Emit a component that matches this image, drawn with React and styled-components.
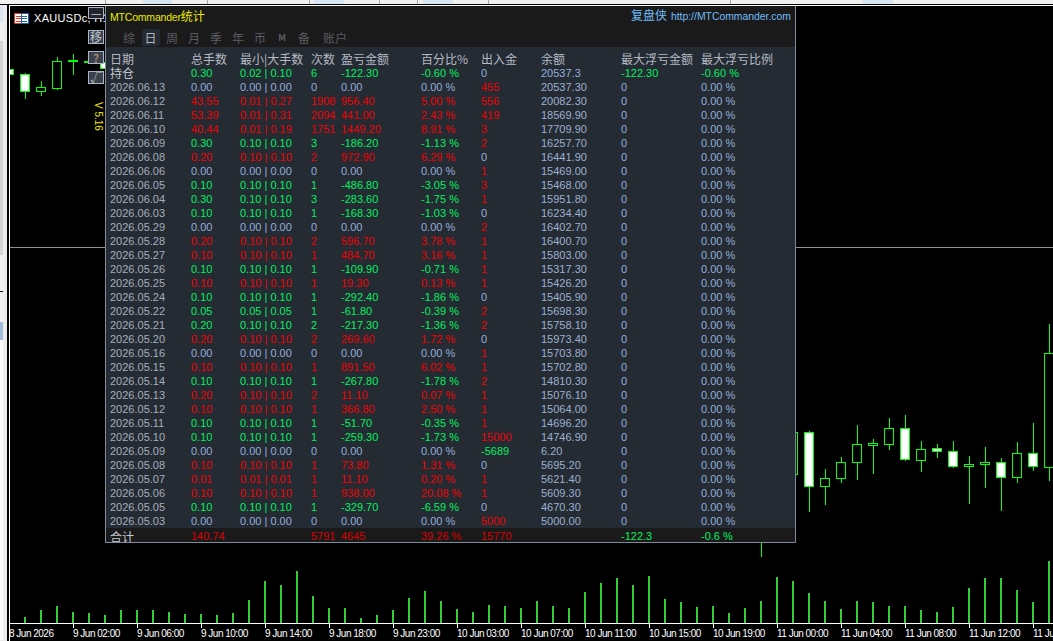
import React from "react";
import styled, { createGlobalStyle } from "styled-components";

const GlobalStyle = createGlobalStyle`
  html, body { margin: 0; padding: 0; background: #000; overflow: hidden; }
  #root { width: 1053px; height: 641px; }
`;

const LATIN = `"Liberation Sans", Arial, "Noto Sans CJK SC", sans-serif`;
const TONES = { flat: "#93aedb", up: "#f00000", down: "#00f060" };

const Page = styled.div`
  width: 1053px;
  height: 641px;
  display: flex;
  flex-direction: column;
  font-family: ${LATIN};
  overflow: hidden;
`;
const TopStrip = styled.div`
  height: 4px;
  flex: none;
  display: flex;
  background: #f0f0f0;
  border-bottom: 1px solid #000;
`;
const StripSlot = styled.div`
  width: ${(p) => p.$w}px;
  flex: none;
  box-sizing: border-box;
  border-right: 1px solid ${(p) => (p.$mark ? "#a8a8a8" : "transparent")};
  background: ${(p) => (p.$on ? "#d8e6f4" : "transparent")};
`;
const Desk = styled.div`
  flex: 1;
  display: flex;
  min-height: 0;
`;
const Gutter = styled.div`
  width: 7px;
  flex: none;
  display: flex;
  flex-direction: column;
  background: #ececec;
  border-right: 2px solid #000;
`;
const GutterPiece = styled.div`
  width: 3px;
  height: ${(p) => p.$h}px;
  flex: none;
  background: ${(p) => p.$c};
`;
const Chart = styled.div`
  position: relative;
  flex: 1;
  display: flex;
  flex-direction: column;
  background: #000;
  border-left: 1px solid #fff;
  border-top: 1px solid #fff;
`;
const Plot = styled.svg`
  position: absolute;
  left: 0;
  top: 0;
  width: 1043px;
  height: 635px;
`;
const AxisRow = styled.div`
  margin-top: auto;
  margin-left: -1px;
  height: 14px;
  display: flex;
  position: relative;
  overflow: hidden;
`;
const AxisLabel = styled.span`
  width: 64px;
  flex: none;
  color: #fff;
  font: 10px/13px ${LATIN};
  letter-spacing: -0.5px;
  white-space: nowrap;
`;
const Symbol = styled.div`
  position: absolute;
  left: 4px;
  top: 5px;
  display: flex;
  align-items: center;
  gap: 5px;
  height: 14px;
  color: #fff;
  font: 11px/14px ${LATIN};
  letter-spacing: 0.3px;
  white-space: nowrap;
`;
const SideButtons = styled.div`
  position: absolute;
  left: 78px;
  top: 1px;
  width: 16px;
  display: flex;
  flex-direction: column;
  align-items: stretch;
  gap: 7px;
`;
const SideButton = styled.div`
  height: ${(p) => p.$h}px;
  margin-bottom: ${(p) => p.$after || 0}px;
  box-sizing: border-box;
  display: flex;
  align-items: center;
  justify-content: center;
  border: 1px solid #aab4c4;
  background: ${(p) => p.$bg || "#3c424c"};
  color: ${(p) => p.$fg || "#c2c8d2"};
  font: 12px/12px "Noto Sans CJK SC", ${LATIN};
`;
const Version = styled.div`
  position: absolute;
  left: 83px;
  top: 96px;
  writing-mode: vertical-rl;
  color: #e8e800;
  font: 10px/10px ${LATIN};
`;
const Panel = styled.div`
  position: absolute;
  left: 95px;
  top: 0;
  width: 691px;
  height: 537px;
  box-sizing: border-box;
  display: flex;
  flex-direction: column;
  background: #252b33;
  border-left: 1px solid #7d8ba0;
  border-right: 1px solid #7d8ba0;
  border-bottom: 1px solid #7d8ba0;
`;
const TitleBar = styled.div`
  height: 41px;
  flex: none;
  box-sizing: border-box;
  background: #1a1a1a;
  padding: 2px 4px 1px;
  display: flex;
  flex-direction: column;
  justify-content: space-between;
`;
const TitleLine = styled.div`
  display: flex;
  justify-content: space-between;
  align-items: center;
  height: 16px;
`;
const AppName = styled.span`
  color: #e8e800;
  font: 10.5px/16px ${LATIN};
  letter-spacing: -0.2px;
  & > b { font: 400 12px/16px "Noto Sans CJK SC", sans-serif; letter-spacing: 0; }
`;
const Brand = styled.span`
  color: #70bcf8;
  font: 10.4px/16px ${LATIN};
  & > b { font: 400 12px/16px "Noto Sans CJK SC", sans-serif; margin-right: 4px; }
`;
const Tabs = styled.div`
  display: flex;
  align-items: center;
  margin-left: -4px;
  padding-left: 12px;
  height: 17px;
`;
const Tab = styled.span`
  width: ${(p) => p.$w || 22}px;
  flex: none;
  height: 17px;
  display: flex;
  align-items: center;
  justify-content: center;
  color: ${(p) => (p.$active ? "#b4b8c0" : "#5a5d62")};
  font: ${(p) => (p.$bold ? "700 9px" : "12px")}/16px "Noto Sans CJK SC", ${LATIN};
  background: ${(p) => (p.$active ? "#252b33" : "transparent")};
  border-radius: 2px;
  margin: 0 ${(p) => p.$gap || 0}px;
`;
const Table = styled.div`
  display: flex;
  flex-direction: column;
  padding-top: 5px;
  flex: 1;
`;
const COLS = "81px 49px 71px 30px 80px 60px 60px 80px 80px 1fr";
const Row = styled.div`
  display: grid;
  grid-template-columns: ${COLS};
  height: 14px;
  padding-left: 4px;
  font: 11px/14px ${LATIN};
  white-space: nowrap;
`;
const HeadRow = styled(Row)`
  font: 12px/14px "Noto Sans CJK SC", ${LATIN};
  color: #b4bac4;
`;
const TotalRow = styled(Row)`
  margin-top: auto;
  height: 14px;
  line-height: 16px;
  overflow: hidden;
  background: #1a1a1a;
`;
const Cell = styled.span`
  color: ${(p) => p.$c || TONES[p.$tone || "flat"]};
`;
const CjkCell = styled.span`
  color: #c4c8d0;
  font: 12px/${(p) => p.$lh || 14}px "Noto Sans CJK SC", sans-serif;
`;

const DATA = `06.13 0.00 0.00 0.00 0 0.00 0.00 455 20537.30
06.12 43.55 0.01 0.27 1908 956.40 5.00 556 20082.30
06.11 53.39 0.01 0.31 2094 441.00 2.43 419 18569.90
06.10 40.44 0.01 0.19 1751 1449.20 8.91 3 17709.90
06.09 0.30 0.10 0.10 3 -186.20 -1.13 2 16257.70
06.08 0.20 0.10 0.10 2 972.90 6.29 0 16441.90
06.06 0.00 0.00 0.00 0 0.00 0.00 1 15469.00
06.05 0.10 0.10 0.10 1 -486.80 -3.05 3 15468.00
06.04 0.30 0.10 0.10 3 -283.60 -1.75 1 15951.80
06.03 0.10 0.10 0.10 1 -168.30 -1.03 0 16234.40
05.29 0.00 0.00 0.00 0 0.00 0.00 2 16402.70
05.28 0.20 0.10 0.10 2 596.70 3.78 1 16400.70
05.27 0.10 0.10 0.10 1 484.70 3.16 1 15803.00
05.26 0.10 0.10 0.10 1 -109.90 -0.71 1 15317.30
05.25 0.10 0.10 0.10 1 19.30 0.13 1 15426.20
05.24 0.10 0.10 0.10 1 -292.40 -1.86 0 15405.90
05.22 0.05 0.05 0.05 1 -61.80 -0.39 2 15698.30
05.21 0.20 0.10 0.10 2 -217.30 -1.36 2 15758.10
05.20 0.20 0.10 0.10 2 269.60 1.72 0 15973.40
05.16 0.00 0.00 0.00 0 0.00 0.00 1 15703.80
05.15 0.10 0.10 0.10 1 891.50 6.02 1 15702.80
05.14 0.10 0.10 0.10 1 -267.80 -1.78 2 14810.30
05.13 0.20 0.10 0.10 2 11.10 0.07 1 15076.10
05.12 0.10 0.10 0.10 1 366.80 2.50 1 15064.00
05.11 0.10 0.10 0.10 1 -51.70 -0.35 1 14696.20
05.10 0.10 0.10 0.10 1 -259.30 -1.73 15000 14746.90
05.09 0.00 0.00 0.00 0 0.00 0.00 -5689 6.20
05.08 0.10 0.10 0.10 1 73.80 1.31 0 5695.20
05.07 0.01 0.01 0.01 1 11.10 0.20 1 5621.40
05.06 0.10 0.10 0.10 1 938.00 20.08 1 5609.30
05.05 0.10 0.10 0.10 1 -329.70 -6.59 0 4670.30
05.03 0.00 0.00 0.00 0 0.00 0.00 5000 5000.00`
  .split("\n")
  .map((l) => l.split(" "));

const toneOf = (v) => {
  const n = parseFloat(v);
  return n > 0 ? "up" : n < 0 ? "down" : "flat";
};

const VOLUMES = [
  6, 13, 17, 11, 10, 8, 13, 13, 13, 11, 9, 9, 8, 10, 23, 42, 38, 52, 27, 15, 15, 5, 8, 13,
  25, 32, 22, 14, 11, 18, 17, 15, 22, 17, 15, 31, 40, 45, 38, 47, 24, 21, 16, 17, 10, 15, 22,
  46, 42, 30, 22, 14, 22, 21, 17, 17, 13, 11, 16, 35, 45, 45, 33, 21, 62,
];

// centre index (x = 25 + 16 * i), body top, body bottom, wick top, wick bottom, filled
const CANDLES = [
  [-1, 69, 74, 69, 74, true],
  [0, 74, 91, 73, 99, true],
  [1, 87, 91, 81, 96, false],
  [2, 61, 88, 57, 90, false],
  [3, 60, 61, 54, 75, false],
  [4, 61, 61, 61, 61, false],
  [5, 62, 68, 62, 68, true],
  [46, 520, 530, 520, 557, false],
  [48, 432, 474, 432, 474, false],
  [49, 432, 486, 431, 512, true],
  [50, 478, 486, 469, 505, false],
  [51, 462, 478, 457, 483, false],
  [52, 444, 462, 425, 480, false],
  [53, 443, 445, 439, 474, false],
  [54, 428, 444, 418, 450, false],
  [55, 428, 459, 415, 461, true],
  [56, 449, 460, 441, 472, false],
  [57, 448, 451, 444, 458, true],
  [58, 451, 466, 441, 468, true],
  [59, 464, 466, 456, 504, false],
  [60, 462, 464, 447, 488, false],
  [61, 462, 477, 458, 511, true],
  [62, 453, 477, 442, 483, false],
  [63, 453, 466, 423, 471, true],
  [64, 353, 467, 324, 481, false],
];

const AXIS = [
  "8 Jun 2026", "9 Jun 02:00", "9 Jun 06:00", "9 Jun 10:00", "9 Jun 14:00", "9 Jun 18:00",
  "9 Jun 23:00", "10 Jun 03:00", "10 Jun 07:00", "10 Jun 11:00", "10 Jun 15:00", "10 Jun 19:00",
  "11 Jun 00:00", "11 Jun 04:00", "11 Jun 08:00", "11 Jun 12:00", "11 Jun 16:00",
];

const TABS = [
  { t: "综" }, { t: "日", active: true, w: 18, gap: 1.5 }, { t: "周" }, { t: "月" }, { t: "季" },
  { t: "年" }, { t: "币" }, { t: "M", bold: true }, { t: "备" }, { t: "账户", w: 40 },
];

const HEAD = ["日期", "总手数", "最小|大手数", "次数", "盈亏金额", "百分比%", "出入金", "余额", "最大浮亏金额", "最大浮亏比例"];

const SLOTS = [
  [106, 1, 0], [37, 0, 0], [29, 0, 1], [36, 1, 0], [102, 1, 0], [4, 0, 0], [30, 0, 1], [36, 1, 0],
  [38, 1, 0], [5, 0, 0], [30, 0, 1], [36, 1, 0], [242, 1, 0], [132, 0, 0], [30, 0, 1],
];

function ChartDrawing() {
  return (
    <Plot viewBox="10 6 1043 635" shapeRendering="crispEdges">
      <rect x="10" y="247" width="1043" height="1" fill="#8a929c" />
      {VOLUMES.map((h, i) => (
        <rect key={i} x={24 + 16 * i} y={623 - h} width="2" height={h} fill="#32cd32" />
      ))}
      <rect x="10" y="623" width="1043" height="1" fill="#fff" />
      {AXIS.map((_, i) => (
        <rect key={i} x={9 + 64 * i} y="623" width="1" height="5" fill="#fff" />
      ))}
      {CANDLES.map(([i, top, bottom, wt, wb, filled]) => {
        const cx = 25 + 16 * i;
        return (
          <g key={i}>
            <rect x={cx} y={wt} width="1" height={wb - wt} fill="#00ff00" />
            {i !== 46 && (
              <rect
                x={cx - 4.5}
                y={top + 0.5}
                width="9"
                height={Math.max(bottom - top, 1)}
                fill={filled ? "#fff" : "#000"}
                stroke="#00ff00"
                strokeWidth="1"
              />
            )}
          </g>
        );
      })}
    </Plot>
  );
}

function FlagIcon() {
  return (
    <svg width="15" height="11" viewBox="0 0 15 11" style={{ flex: "none" }} shapeRendering="crispEdges">
      <rect x="0.5" y="0.5" width="7" height="10" fill="#fff" stroke="#e0301e" />
      <rect x="7.5" y="0.5" width="7" height="10" fill="#fff" stroke="#1060b8" />
      <path d="M2 3h5M2 5.5h5M2 8h5" stroke="#e0301e" />
      <path d="M8 3h5M8 5.5h5M8 8h5" stroke="#1060b8" />
    </svg>
  );
}

function MinMax({ a, b, tone }) {
  return (
    <Cell $tone={tone}>
      {a} | {b}
    </Cell>
  );
}

export default function App() {
  return (
    <Page>
      <GlobalStyle />
      <TopStrip>
        {SLOTS.map(([w, mark, on], i) => (
          <StripSlot key={i} $w={w} $mark={!!mark} $on={!!on} />
        ))}
      </TopStrip>
      <Desk>
        <Gutter>
          <GutterPiece $h={1} $c="#f0f0f0" />
          <GutterPiece $h={16} $c="#d8e4f0" />
          <GutterPiece $h={19} $c="#f0f0f0" />
          <GutterPiece $h={214} $c="#d4d4d4" />
          <GutterPiece $h={36} $c="#f0f0f0" />
          <GutterPiece $h={1} $c="#000" />
          <GutterPiece $h={30} $c="#f0f0f0" />
          <GutterPiece $h={18} $c="#a0bcd8" />
          <GutterPiece $h={300} $c="#fafafa" />
        </Gutter>
        <Chart>
          <ChartDrawing />
          <Symbol>
            <FlagIcon />
            <span>XAUUSDc, H1</span>
          </Symbol>
          <SideButtons>
            <SideButton $h={12} $after={4} $bg="#22262c">—</SideButton>
            <SideButton $h={14}>移</SideButton>
            <SideButton $h={13} $fg="#c8a880">?</SideButton>
            <SideButton $h={13}>√</SideButton>
          </SideButtons>
          <Version>V 5.16</Version>
          <AxisRow>
            {AXIS.map((a) => (
              <AxisLabel key={a}>{a}</AxisLabel>
            ))}
          </AxisRow>
          <Panel>
            <TitleBar>
              <TitleLine>
                <AppName>
                  MTCommander<b>统计</b>
                </AppName>
                <Brand>
                  <b>复盘侠</b>http://MTCommander.com
                </Brand>
              </TitleLine>
              <Tabs>
                {TABS.map((t) => (
                  <Tab key={t.t} $active={t.active} $w={t.w} $gap={t.gap} $bold={t.bold}>
                    {t.t}
                  </Tab>
                ))}
              </Tabs>
            </TitleBar>
            <Table>
              <HeadRow>
                {HEAD.map((h) => (
                  <span key={h}>{h}</span>
                ))}
              </HeadRow>
              <Row>
                <CjkCell>持仓</CjkCell>
                <Cell $tone="down">0.30</Cell>
                <MinMax a="0.02" b="0.10" tone="down" />
                <Cell $tone="down">6</Cell>
                <Cell $tone="down">-122.30</Cell>
                <Cell $tone="down">-0.60 %</Cell>
                <Cell>0</Cell>
                <Cell>20537.3</Cell>
                <Cell $tone="down">-122.30</Cell>
                <Cell $tone="down">-0.60 %</Cell>
              </Row>
              {DATA.map(([date, lots, min, max, count, pnl, pct, flow, balance]) => {
                const tone = toneOf(pnl);
                return (
                  <Row key={date}>
                    <Cell $c="#a6aebe">2026.{date}</Cell>
                    <Cell $tone={tone}>{lots}</Cell>
                    <MinMax a={min} b={max} tone={tone} />
                    <Cell $tone={tone}>{count}</Cell>
                    <Cell $tone={tone}>{pnl}</Cell>
                    <Cell $tone={tone}>{pct} %</Cell>
                    <Cell $tone={toneOf(flow)}>{flow}</Cell>
                    <Cell $c="#9cb0d0">{balance}</Cell>
                    <Cell>0</Cell>
                    <Cell>0.00 %</Cell>
                  </Row>
                );
              })}
              <TotalRow>
                <CjkCell $lh={17}>合计</CjkCell>
                <Cell $c="#d80000">140.74</Cell>
                <span />
                <Cell $c="#d80000">5791</Cell>
                <Cell $c="#d80000">4645</Cell>
                <Cell $c="#d80000">39.26 %</Cell>
                <Cell $c="#d80000">15770</Cell>
                <span />
                <Cell $tone="down">-122.3</Cell>
                <Cell $tone="down">-0.6 %</Cell>
              </TotalRow>
            </Table>
          </Panel>
        </Chart>
      </Desk>
    </Page>
  );
}
